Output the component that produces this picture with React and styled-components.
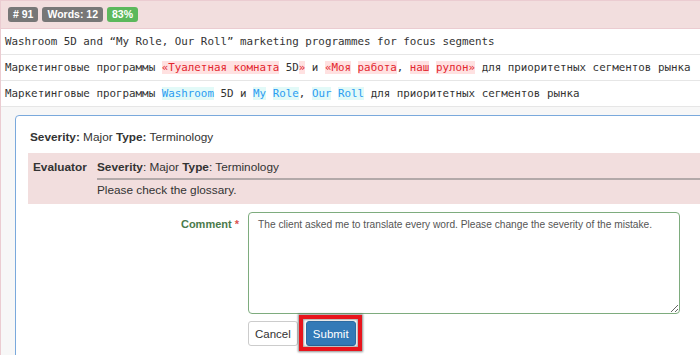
import React from "react";
import styled, { createGlobalStyle } from "styled-components";

const Global = createGlobalStyle`
  html, body { margin: 0; padding: 0; background: #fff; overflow: hidden; }
  body { font-family: "Liberation Sans", Arial, sans-serif; color: #333; }
  #root { width: 700px; height: 355px; overflow: hidden; }
`;

const Segment = styled.div`
  width: 730px;
  border: 1px solid #ebccd1;
  background: #f7f7f7;
  min-height: 420px;
`;

const Header = styled.div`
  display: flex;
  gap: 4px;
  align-items: center;
  height: 27px;
  padding: 0 7px;
  background: #f2dede;
  border-bottom: 1px solid #ebccd1;
`;

const Badge = styled.span`
  display: inline-block;
  font-size: 10.5px;
  font-weight: bold;
  line-height: 1;
  padding: 2px 5px 2px;
  border-radius: 3px;
  color: #fff;
  background: ${(p) => (p.$tone === "success" ? "#5cb85c" : "#777")};
`;

const Row = styled.div`
  height: 25px;
  line-height: 25px;
  padding-left: 4px;
  background: #fff;
  border-bottom: 1px solid #e6e6e6;
  font-family: "DejaVu Sans Mono", "Liberation Mono", monospace;
  font-size: 10.85px;
  white-space: pre;
  color: #333;
`;

const Mark = styled.span`
  color: ${(p) => (p.$kind === "del" ? "#e3262e" : "#2b9cf2")};
  background: ${(p) => (p.$kind === "del" ? "#ffe1e1" : "#e2faf8")};
`;

const Panel = styled.div`
  margin: 8px 0 0 14px;
  border: 1px solid #7aa9dc;
  border-radius: 4px;
  background: #fff;
  padding: 12px 0 20px 12px;
`;

const Summary = styled.div`
  font-size: 11.8px;
  line-height: 18px;
  padding-left: 2px;
  color: #333;
`;

const Evaluator = styled.div`
  margin-top: 7px;
  background: #f2dede;
  display: grid;
  grid-template-columns: 64px 1fr;
  padding: 6px 0 6px 5px;
  font-size: 11.8px;
  line-height: 16px;
`;

const EvalLabel = styled.div`
  font-weight: bold;
`;

const EvalHead = styled.div`
  padding-bottom: 3px;
  border-bottom: 2px solid #b3a9a9;
`;

const EvalNote = styled.div`
  padding-top: 2px;
`;

const FormRow = styled.div`
  display: grid;
  grid-template-columns: 212px 432px;
  column-gap: 8px;
  margin-top: 8px;
`;

const Label = styled.label`
  text-align: right;
  font-size: 11px;
  font-weight: bold;
  color: #4a7a4b;
  padding-top: 6px;
  padding-right: 1px;
`;

const Req = styled.span`
  color: #d9534f;
`;

const TextArea = styled.textarea`
  box-sizing: border-box;
  width: 432px;
  height: 102px;
  border: 1px solid #7eac7e;
  border-radius: 4px;
  padding: 6px 9px;
  font-family: "Liberation Sans", Arial, sans-serif;
  font-size: 10.2px;
  color: #555;
  resize: vertical;
  outline: none;
  margin: 0;
`;

const Actions = styled.div`
  grid-column: 2;
  display: flex;
  align-items: center;
  margin-top: 7px;
`;

const Button = styled.button`
  box-sizing: border-box;
  height: 25px;
  padding: 0 6px;
  font-family: "Liberation Sans", Arial, sans-serif;
  font-size: 11.5px;
  border-radius: 3px;
  border: 1px solid ${(p) => (p.$primary ? "#2e6da4" : "#ccc")};
  background: ${(p) => (p.$primary ? "#337ab7" : "#fff")};
  color: ${(p) => (p.$primary ? "#fff" : "#333")};
`;

const Callout = styled.span`
  position: relative;
  display: inline-flex;
  margin-left: 8px;
  &::after {
    content: "";
    position: absolute;
    inset: -6px -6px -5px -7px;
    border: 4px solid #e8141c;
    box-shadow: 0 0 2px 1px rgba(0, 0, 0, 0.45), inset 0 0 2px 1px rgba(0, 0, 0, 0.35);
    pointer-events: none;
  }
`;

export default function App() {
  return (
    <>
      <Global />
      <Segment>
        <Header>
          <Badge># 91</Badge>
          <Badge>Words: 12</Badge>
          <Badge $tone="success">83%</Badge>
        </Header>
        <Row>Washroom 5D and “My Role, Our Roll” marketing programmes for focus segments</Row>
        <Row>
          Маркетинговые программы <Mark $kind="del">«Туалетная комната</Mark> 5D
          <Mark $kind="del">»</Mark> и <Mark $kind="del">«Моя</Mark> <Mark $kind="del">работа</Mark>,{" "}
          <Mark $kind="del">наш</Mark> <Mark $kind="del">рулон»</Mark> для приоритетных сегментов рынка
        </Row>
        <Row>
          Маркетинговые программы <Mark $kind="ins">Washroom</Mark> 5D и <Mark $kind="ins">My</Mark>{" "}
          <Mark $kind="ins">Role</Mark>, <Mark $kind="ins">Our</Mark> <Mark $kind="ins">Roll</Mark> для приоритетных сегментов рынка
        </Row>
        <Panel>
          <Summary>
            <b>Severity:</b> Major <b>Type:</b> Terminology
          </Summary>
          <Evaluator>
            <EvalLabel>Evaluator</EvalLabel>
            <div>
              <EvalHead>
                <b>Severity</b>: Major <b>Type</b>: Terminology
              </EvalHead>
              <EvalNote>Please check the glossary.</EvalNote>
            </div>
          </Evaluator>
          <FormRow>
            <Label>
              Comment <Req>*</Req>
            </Label>
            <TextArea defaultValue="The client asked me to translate every word. Please change the severity of the mistake." />
            <Actions>
              <Button>Cancel</Button>
              <Callout>
                <Button $primary>Submit</Button>
              </Callout>
            </Actions>
          </FormRow>
        </Panel>
      </Segment>
    </>
  );
}
